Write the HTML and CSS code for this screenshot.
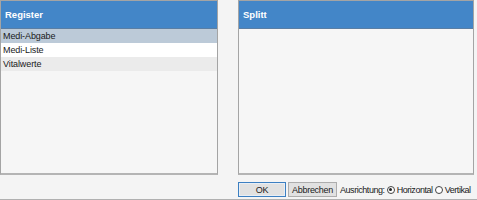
FILE: index.html
```html
<!DOCTYPE html>
<html>
<head>
<meta charset="utf-8">
<link rel="stylesheet" href="styles.css">
</head>
<body>
<div class="window">
  <div class="panels">
    <div class="panel left">
      <div class="panel-head">Register</div>
      <div class="row sel">Medi-Abgabe</div>
      <div class="row white">Medi-Liste</div>
      <div class="row alt">Vitalwerte</div>
    </div>
    <div class="divider"></div>
    <div class="panel right">
      <div class="panel-head">Splitt</div>
    </div>
  </div>
  <div class="bottom">
    <button class="btn ok">OK</button>
    <button class="btn">Abbrechen</button>
    <span class="label">Ausrichtung:</span>
    <span class="radio on"></span><span class="label">Horizontal</span>
    <span class="radio"></span><span class="label">Vertikal</span>
  </div>
</div>
</body>
</html>
```
FILE: styles.css
```css
html, body {
  margin: 0;
  padding: 0;
  background: #f4f4f4;
}
.window {
  width: 477px;
  height: 200px;
  box-sizing: border-box;
  border-bottom: 1px solid #b0b0b0;
  font-family: "Liberation Sans", Arial, sans-serif;
  font-size: 9px;
  color: #1a1a1a;
  display: flex;
  flex-direction: column;
}
.panels {
  display: flex;
  height: 175px;
}
.panel {
  box-sizing: border-box;
  height: 175px;
  background: #f6f6f6;
  border: 1px solid #a4a4a4;
  border-bottom: 2px solid #b4b4b4;
  display: flex;
  flex-direction: column;
}
.left { width: 218px; }
.right { width: 236px; }
.divider {
  width: 20px;
}
.panel-head {
  height: 28px;
  box-sizing: border-box;
  background: #4386c8;
  border-bottom: 1px solid #5a7ea4;
  color: #ffffff;
  font-weight: bold;
  font-size: 9.5px;
  display: flex;
  align-items: center;
  padding-left: 4px;
  flex-shrink: 0;
}
.row {
  height: 14px;
  line-height: 14px;
  padding-left: 2px;
  letter-spacing: -0.1px;
}
.row.sel { background: #bccad8; }
.row.white { background: #ffffff; }
.row.alt { background: #ebebeb; }
.bottom {
  display: flex;
  align-items: center;
  padding-left: 238px;
  padding-top: 7px;
  height: 15px;
}
.btn {
  font-family: inherit;
  font-size: 9px;
  color: #1a1a1a;
  height: 15px;
  box-sizing: border-box;
  padding: 0;
  margin: 0 2px 0 0;
  background: #e1e1e1;
  border: 1px solid #adadad;
  letter-spacing: -0.3px;
}
.btn.ok {
  width: 48px;
  border: 1px solid #3c7fc1;
  box-shadow: inset 0 0 0 1px #e8eef5;
}
.btn:not(.ok) { width: 49px; }
.label {
  margin-left: 1px;
  letter-spacing: -0.45px;
}
.radio {
  width: 8px;
  height: 8px;
  box-sizing: border-box;
  border: 1px solid #444;
  border-radius: 50%;
  background: #fff;
  margin: 0 1px 0 2px;
  position: relative;
}
.radio.on::after {
  content: "";
  position: absolute;
  left: 1.5px;
  top: 1.5px;
  width: 3px;
  height: 3px;
  border-radius: 50%;
  background: #222;
}
```
